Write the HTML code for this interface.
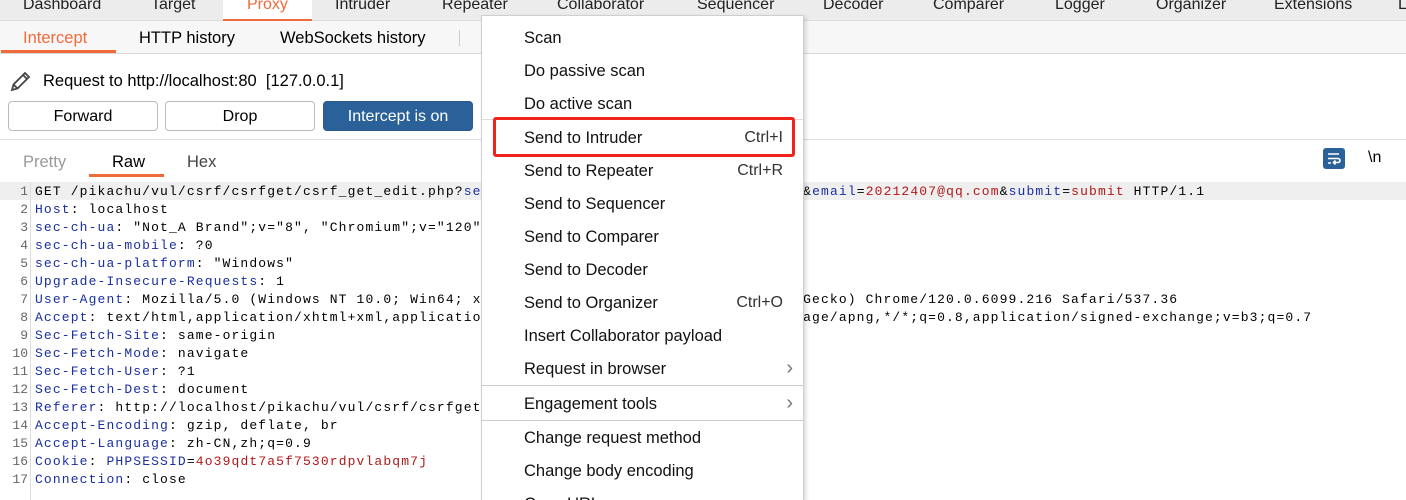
<!DOCTYPE html>
<html style="height:500px;overflow:hidden"><head><meta charset="utf-8"><style>
*{margin:0;padding:0;box-sizing:border-box}
body{width:1406px;height:500px;overflow:hidden;background:#fff;font-family:"Liberation Sans","Noto Sans CJK SC",sans-serif;position:relative;color:#000}
.a{position:absolute;white-space:nowrap}
.top{left:0;top:0;width:1406px;height:21px;background:#ececec;border-bottom:1px solid #ddd}
.tab{position:absolute;top:-4px;font-size:16px;color:#222}
.sub{left:0;top:21px;width:1406px;height:33px;background:#f7f7f7;border-bottom:1px solid #d8d8d8}
.btn{position:absolute;top:101px;height:30px;border:1px solid #bbb;border-radius:4px;background:#fff;font-size:16px;text-align:center;line-height:30px}
.code{font-family:"Liberation Mono",monospace;font-size:13px;line-height:18px;letter-spacing:1.13px}
.k{color:#1a2fa0}.v{color:#b01818}
.ln{position:absolute;left:0;width:28px;text-align:right;color:#666;font-family:"Liberation Mono",monospace;font-size:13px}
.menu{left:481px;top:15px;width:323px;height:485px;background:#fff;border:1px solid #cfcfcf;border-bottom:none;box-shadow:2px 2px 4px rgba(0,0,0,.15)}
.mi{position:absolute;left:42px;font-size:16.5px;color:#111}
.sc{position:absolute;right:20px;font-size:16px;color:#333}
</style></head><body>
<div class="a top"></div>
<div class="tab" style="left:23px">Dashboard</div>
<div class="tab" style="left:151px">Target</div>
<div class="a" style="left:223px;top:0;width:89px;height:21px;background:#fff;border-bottom:2px solid #f06a3a"></div>
<div class="tab" style="left:247px;color:#f06a3a">Proxy</div>
<div class="tab" style="left:335px">Intruder</div>
<div class="tab" style="left:442px">Repeater</div>
<div class="tab" style="left:557px">Collaborator</div>
<div class="tab" style="left:697px">Sequencer</div>
<div class="tab" style="left:823px">Decoder</div>
<div class="tab" style="left:933px">Comparer</div>
<div class="tab" style="left:1055px">Logger</div>
<div class="tab" style="left:1156px">Organizer</div>
<div class="tab" style="left:1274px">Extensions</div>
<div class="tab" style="left:1398px">L</div>
<div class="a sub"></div>
<div class="a" style="left:23px;top:29px;font-size:16.5px;color:#f06a3a">Intercept</div>
<div class="a" style="left:1px;top:50px;width:115px;height:3px;background:#f06a3a"></div>
<div class="a" style="left:139px;top:29px;font-size:16.5px">HTTP history</div>
<div class="a" style="left:280px;top:29px;font-size:16.5px">WebSockets history</div>
<div class="a" style="left:459px;top:30px;width:1px;height:16px;background:#ccc"></div>
<svg class="a" style="left:9px;top:69px" width="24" height="24" viewBox="0 0 24 24" fill="none" stroke="#444" stroke-width="1.8"><path d="M3 21l1.5-5.5L16 4l4 4L8.5 19.5z M14 6l4 4 M4.5 15.5l4 4"/></svg>
<div class="a" style="left:43px;top:72px;font-size:16.5px">Request to http://localhost:80&nbsp; [127.0.0.1]</div>
<div class="btn" style="left:8px;width:150px">Forward</div>
<div class="btn" style="left:165px;width:150px">Drop</div>
<div class="btn" style="left:323px;width:150px;background:#2a6199;border-color:#2a5a8a;color:#fff">Intercept is on</div>
<div class="a" style="left:0;top:139px;width:1406px;height:1px;background:#ddd"></div>
<div class="a" style="left:23px;top:153px;font-size:16.5px;color:#999">Pretty</div>
<div class="a" style="left:112px;top:153px;font-size:16.5px">Raw</div>
<div class="a" style="left:89px;top:174px;width:75px;height:3px;background:#f06a3a"></div>
<div class="a" style="left:187px;top:153px;font-size:16.5px;color:#444">Hex</div>
<div class="a" style="left:1323px;top:148px;width:22px;height:21px;background:#2a6199;border-radius:3px"></div>
<svg class="a" style="left:1326px;top:151px" width="16" height="15" viewBox="0 0 16 15" stroke="#fff" stroke-width="1.6" fill="none"><path d="M2 3h11 M2 7.5h10a2 2 0 010 4H8 M9.5 9.5l-2 2 2 2 M2 12h3"/></svg>
<div class="a" style="left:1368px;top:149px;font-size:16px">\n</div>
<div class="a" style="left:0;top:182px;width:1406px;height:18px;background:#efefef"></div>
<div class="a" style="left:30px;top:182px;width:1px;height:318px;background:#ddd"></div>
<div class="a code" style="left:35px;top:183px">
<div>GET /pikachu/vul/csrf/csrfget/csrf_get_edit.php?<span class="k">sex</span>=<span class="v">boy</span>&amp;<span class="k">phonenum</span>=<span class="v">18626545453</span>&amp;<span class="k">add</span>=<span class="v">chain</span>&amp;<span class="k">email</span>=<span class="v">20212407@qq.com</span>&amp;<span class="k">submit</span>=<span class="v">submit</span> HTTP/1.1</div>
<div><span class="k">Host</span>: localhost</div>
<div><span class="k">sec-ch-ua</span>: "Not_A Brand";v="8", "Chromium";v="120", "Google Chrome";v="120"</div>
<div><span class="k">sec-ch-ua-mobile</span>: ?0</div>
<div><span class="k">sec-ch-ua-platform</span>: "Windows"</div>
<div><span class="k">Upgrade-Insecure-Requests</span>: 1</div>
<div><span class="k">User-Agent</span>: Mozilla/5.0 (Windows NT 10.0; Win64; x64) AppleWebKit/537.36 (KHTML, like Gecko) Chrome/120.0.6099.216 Safari/537.36</div>
<div><span class="k">Accept</span>: text/html,application/xhtml+xml,application/xml;q=0.9,image/avif,image/webp,image/apng,*/*;q=0.8,application/signed-exchange;v=b3;q=0.7</div>
<div><span class="k">Sec-Fetch-Site</span>: same-origin</div>
<div><span class="k">Sec-Fetch-Mode</span>: navigate</div>
<div><span class="k">Sec-Fetch-User</span>: ?1</div>
<div><span class="k">Sec-Fetch-Dest</span>: document</div>
<div><span class="k">Referer</span>: http://localhost/pikachu/vul/csrf/csrfget/csrf_get_edit.php</div>
<div><span class="k">Accept-Encoding</span>: gzip, deflate, br</div>
<div><span class="k">Accept-Language</span>: zh-CN,zh;q=0.9</div>
<div><span class="k">Cookie</span>: <span class="k">PHPSESSID</span>=<span class="v">4o39qdt7a5f7530rdpvlabqm7j</span></div>
<div><span class="k">Connection</span>: close</div>
</div>
<div class="a" style="left:0;top:183px;width:26px">
<div class="ln" style="position:relative;line-height:18px">1<br>2<br>3<br>4<br>5<br>6<br>7<br>8<br>9<br>10<br>11<br>12<br>13<br>14<br>15<br>16<br>17</div></div>
<div class="a menu">
<div class="mi" style="top:13px">Scan</div>
<div class="mi" style="top:46px">Do passive scan</div>
<div class="mi" style="top:79px">Do active scan</div>
<div class="a" style="left:0;top:103px;width:321px;height:1px;background:#ddd"></div>
<div class="mi" style="top:113px">Send to Intruder</div><div class="sc" style="top:113px">Ctrl+I</div>
<div class="a" style="left:11px;top:101px;width:302px;height:40px;border:3px solid #f0241c;border-radius:3px"></div>
<div class="mi" style="top:146px">Send to Repeater</div><div class="sc" style="top:146px">Ctrl+R</div>
<div class="mi" style="top:179px">Send to Sequencer</div>
<div class="mi" style="top:212px">Send to Comparer</div>
<div class="mi" style="top:245px">Send to Decoder</div>
<div class="mi" style="top:278px">Send to Organizer</div><div class="sc" style="top:278px">Ctrl+O</div>
<div class="mi" style="top:311px">Insert Collaborator payload</div>
<div class="mi" style="top:344px">Request in browser</div><div class="sc" style="top:341px;color:#777;right:10px;font-size:20px">&#x203A;</div>
<div class="a" style="left:0;top:369px;width:321px;height:1px;background:#ccc"></div>
<div class="mi" style="top:379px">Engagement tools</div><div class="sc" style="top:376px;color:#777;right:10px;font-size:20px">&#x203A;</div>
<div class="a" style="left:0;top:404px;width:321px;height:1px;background:#ccc"></div>
<div class="mi" style="top:413px">Change request method</div>
<div class="mi" style="top:446px">Change body encoding</div>
<div class="mi" style="top:479px">Copy URL</div>
</div>
</body></html>
